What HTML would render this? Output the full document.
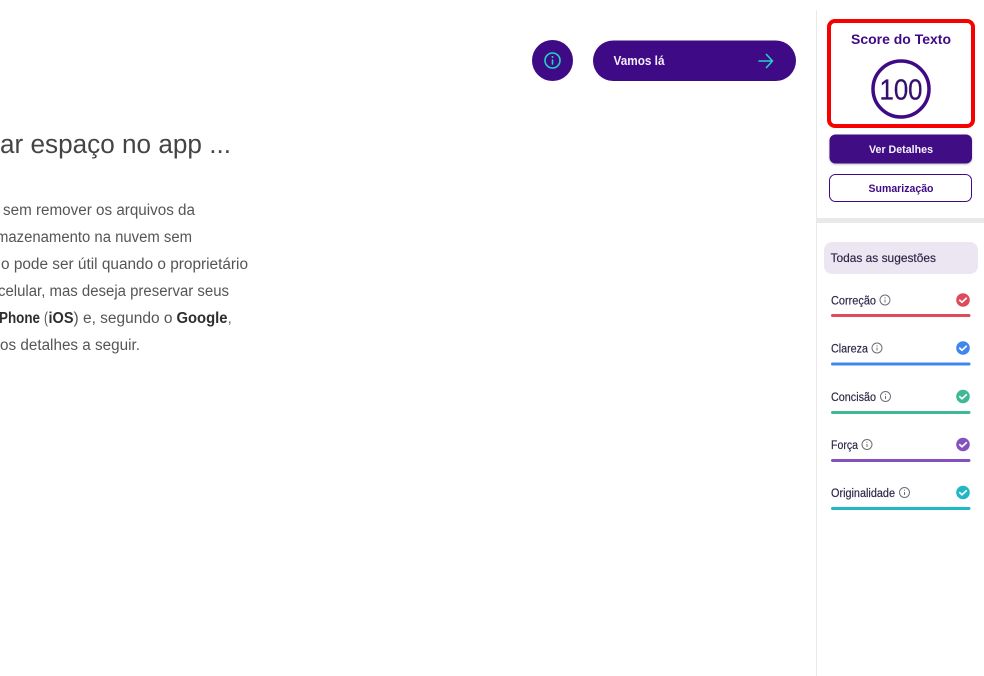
<!DOCTYPE html>
<html lang="pt-BR">
<head>
<meta charset="utf-8">
<title>Score do Texto</title>
<style>
html,body{margin:0;padding:0;background:#fff;width:984px;height:676px;overflow:hidden}
svg{display:block;font-family:"Liberation Sans",sans-serif}
.b{fill:#555555;font-size:15.5px}
.bb{fill:#2e2e2e;font-size:15.5px;font-weight:700}
.l{fill:#2b2344;font-size:11.5px;stroke:#2b2344;stroke-width:.15}
.i{fill:none;stroke:#6f6d78;stroke-width:1}
.ck{fill:none;stroke:#fff;stroke-width:1.7;stroke-linecap:round;stroke-linejoin:round}
</style>
</head>
<body>
<svg width="984" height="676" viewBox="0 0 984 676" xmlns="http://www.w3.org/2000/svg">
<defs>
<filter id="s" x="-10%" y="-20%" width="120%" height="150%"><feDropShadow dx="0" dy="1" stdDeviation="1" flood-color="#000" flood-opacity=".25"/></filter>
</defs>
<rect width="984" height="676" fill="#fff"/>

<!-- top actions -->
<circle cx="552.500" cy="60.500" r="20.500" fill="#3f0a85"/>
<circle cx="552.500" cy="60.500" r="7.500" fill="none" stroke="#22d3c8" stroke-width="1.600"/>
<path d="M552.500 60v4" stroke="#22d3c8" stroke-width="1.600" stroke-linecap="round"/>
<circle cx="552.500" cy="57" r="1" fill="#22d3c8"/>
<rect x="593" y="40.500" width="203" height="40.500" rx="20.250" fill="#3f0a85"/>
<text x="613.500" y="65" font-size="13" font-weight="700" fill="#f3eefb" textLength="51" lengthAdjust="spacingAndGlyphs">Vamos lá</text>
<path d="M759 61h13M766.500 54.500l6 6.500-6 6.500" fill="none" stroke="#22d3c8" stroke-width="1.600" stroke-linecap="round" stroke-linejoin="round"/>

<!-- article -->
<text x="0" y="153" font-size="25.500" fill="#444444" textLength="231" lengthAdjust="spacingAndGlyphs">ar espaço no app ...</text>
<text class="b" x="3" y="215" textLength="192" lengthAdjust="spacingAndGlyphs">sem remover os arquivos da</text>
<text class="b" x="-4" y="242" textLength="196" lengthAdjust="spacingAndGlyphs">mazenamento na nuvem sem</text>
<text class="b" x="1" y="269" textLength="247" lengthAdjust="spacingAndGlyphs">o pode ser útil quando o proprietário</text>
<text class="b" x="-2" y="296" textLength="231" lengthAdjust="spacingAndGlyphs">celular, mas deseja preservar seus</text>
<text class="bb" x="-1" y="323" textLength="41" lengthAdjust="spacingAndGlyphs">Phone</text>
<text class="b" x="44" y="323" textLength="4" lengthAdjust="spacingAndGlyphs">(</text>
<text class="bb" x="48.500" y="323" textLength="25" lengthAdjust="spacingAndGlyphs">iOS</text>
<text class="b" x="73.500" y="323" textLength="99" lengthAdjust="spacingAndGlyphs">) e, segundo o</text>
<text class="bb" x="176.500" y="323" textLength="51" lengthAdjust="spacingAndGlyphs">Google</text>
<text class="b" x="228" y="323" textLength="3.500" lengthAdjust="spacingAndGlyphs">,</text>
<text class="b" x="0" y="350" textLength="140" lengthAdjust="spacingAndGlyphs">os detalhes a seguir.</text>

<!-- sidebar -->
<rect x="816" y="10" width="1" height="666" fill="#e9e9e9"/>
<rect x="829" y="21" width="144" height="105" rx="6" fill="#fff" stroke="#f60000" stroke-width="4"/>
<text x="901" y="44" text-anchor="middle" font-size="13.500" font-weight="700" fill="#3f0a85" textLength="100" lengthAdjust="spacingAndGlyphs">Score do Texto</text>
<circle cx="901" cy="89" r="28" fill="none" stroke="#3f0a85" stroke-width="3.500"/>
<text x="879.500" y="99.500" font-size="29" fill="#35106f" stroke="#35106f" stroke-width=".3" textLength="43" lengthAdjust="spacingAndGlyphs">100</text>

<rect x="829.500" y="134.500" width="142.500" height="29" rx="6" fill="#3f0a85" filter="url(#s)"/>
<text x="869" y="153" font-size="11" font-weight="700" fill="#f6f2fc" textLength="64" lengthAdjust="spacingAndGlyphs">Ver Detalhes</text>
<rect x="829.500" y="174.500" width="142" height="27" rx="6" fill="#fff" stroke="#3f0a85" stroke-width="1"/>
<text x="868.500" y="192" font-size="11" font-weight="700" fill="#3f0a85" textLength="65" lengthAdjust="spacingAndGlyphs">Sumarização</text>

<rect x="817" y="218" width="167" height="5" fill="#e9e9e9"/>

<rect x="824" y="242" width="154" height="32" rx="8" fill="#ebe6f2"/>
<text x="830.500" y="262" font-size="12" fill="#2b2344" stroke="#2b2344" stroke-width=".15" textLength="105.500" lengthAdjust="spacingAndGlyphs">Todas as sugestões</text>

<!-- Correção -->
<text class="l" x="831" y="304.500" textLength="45" lengthAdjust="spacingAndGlyphs">Correção</text>
<circle class="i" cx="885" cy="300" r="5"/><path class="i" d="M885 299.500v3M885 297.300v1"/>
<circle cx="963" cy="300" r="6.800" fill="#e04b5b"/><path class="ck" d="M959.800 300.200l2.200 2.100 4.300-4"/>
<rect x="831" y="314" width="139.500" height="3" rx="1.500" fill="#e04b5b"/>

<!-- Clareza -->
<text class="l" x="831" y="352.500" textLength="37" lengthAdjust="spacingAndGlyphs">Clareza</text>
<circle class="i" cx="877" cy="348" r="5"/><path class="i" d="M877 347.500v3M877 345.300v1"/>
<circle cx="963" cy="348" r="6.800" fill="#3f86f0"/><path class="ck" d="M959.800 348.200l2.200 2.100 4.300-4"/>
<rect x="831" y="362.500" width="139.500" height="3" rx="1.500" fill="#3f86f0"/>

<!-- Concisão -->
<text class="l" x="831" y="401" textLength="45" lengthAdjust="spacingAndGlyphs">Concisão</text>
<circle class="i" cx="885.500" cy="396.500" r="5"/><path class="i" d="M885.500 396v3M885.500 393.800v1"/>
<circle cx="963" cy="396.500" r="6.800" fill="#3fb896"/><path class="ck" d="M959.800 396.700l2.200 2.100 4.300-4"/>
<rect x="831" y="411" width="139.500" height="3" rx="1.500" fill="#3fb896"/>

<!-- Força -->
<text class="l" x="831" y="449" textLength="27" lengthAdjust="spacingAndGlyphs">Força</text>
<circle class="i" cx="867" cy="444.500" r="5"/><path class="i" d="M867 444v3M867 441.800v1"/>
<circle cx="963" cy="444.500" r="6.800" fill="#8452bd"/><path class="ck" d="M959.800 444.700l2.200 2.100 4.300-4"/>
<rect x="831" y="459" width="139.500" height="3" rx="1.500" fill="#8452bd"/>

<!-- Originalidade -->
<text class="l" x="831" y="497" textLength="64" lengthAdjust="spacingAndGlyphs">Originalidade</text>
<circle class="i" cx="904.500" cy="492.500" r="5"/><path class="i" d="M904.500 492v3M904.500 489.800v1"/>
<circle cx="963" cy="492.500" r="6.800" fill="#1fb8c4"/><path class="ck" d="M959.800 492.700l2.200 2.100 4.300-4"/>
<rect x="831" y="507" width="139.500" height="3" rx="1.500" fill="#1fb8c4"/>
</svg>
</body>
</html>
